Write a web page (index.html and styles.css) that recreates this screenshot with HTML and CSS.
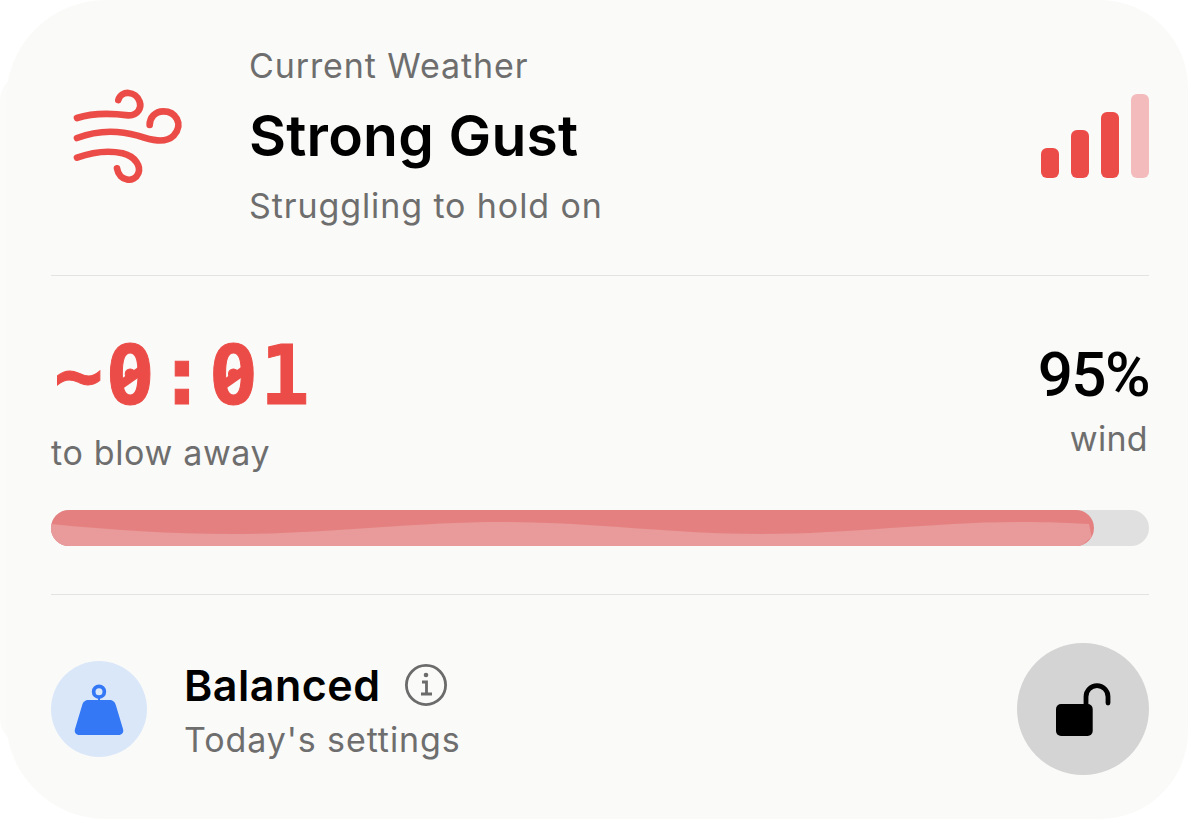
FILE: index.html
```html
<!doctype html>
<html lang="en">
<head>
  <meta charset="UTF-8" />
  <meta name="viewport" content="width=device-width, initial-scale=1.0" />
  <title>Current Weather</title>
  <link rel="stylesheet" href="styles.css">
</head>
<body>

<section class="card">
  <!--Weather-->
  <div class="weather">
    <svg class="wind-icon" width="199" height="130" viewBox="30 0 597 390">
      <path d="M108 144C150 130 200 128 262 136C292 137 302 112 296 95C285 62 240 60 232 90" />
      <path d="M108 204C170 180 230 180 290 197C330 210 372 222 398 197C430 160 402 124 367 124C342 124 326 143 326 165" />
      <path d="M108 263C150 248 200 240 245 250C285 260 300 290 292 310C280 340 235 335 228 295" />
    </svg>
    <div class="weather-text">
      <p class="muted">Current Weather</p>
      <p class="weather-title">Strong Gust</p>
      <p class="muted">Struggling to hold on</p>
    </div>
    <div class="bars">
      <span class="bar bar-1"></span>
      <span class="bar bar-2"></span>
      <span class="bar bar-3"></span>
      <span class="bar bar-4"></span>
    </div>
  </div>

  <!--Countdown-->
  <div class="status">
    <div class="status-row">
      <div>
        <p class="time">~<span class="zero">0</span>:<span class="zero">0</span>1</p>
        <p class="muted time-label">to blow away</p>
      </div>
      <div class="wind">
        <p class="wind-value">95%</p>
        <p class="muted wind-label">wind</p>
      </div>
    </div>
    <div class="progress">
      <div class="progress-fill">
        <svg class="wave" width="1043" height="36" viewBox="0 0 1043 36">
          <path d="M0 14C60 20 120 24 180 24C280 24 360 12 450 12C540 12 620 24 710 24C800 24 880 12 970 12C1000 12 1020 13 1038 14L1040.6 27L1030 36L0 36Z" />
        </svg>
      </div>
    </div>
  </div>

  <!--Settings-->
  <div class="settings">
    <div class="weight">
      <svg width="96" height="96" viewBox="0 0 96 96">
        <circle class="weight-ring" cx="48" cy="30.7" r="5.35" />
        <rect class="weight-body" x="47" y="35" width="2" height="5" />
        <path class="weight-body" d="M38 39H58C62 39 64 41 64.8 44L72 68C73 71.5 71 74 67.5 74H28.5C25 74 23 71.5 24 68L31.2 44C32 41 34 39 38 39Z" />
      </svg>
    </div>
    <div class="settings-text">
      <div class="settings-title">
        <span>Balanced</span>
        <svg class="info" width="42" height="42" viewBox="0 0 42 42">
          <circle cx="21" cy="21" r="19.6" />
          <path d="M17 18H21.5V30M16 30H27" />
          <circle class="info-dot" cx="21" cy="11" r="2.3" />
        </svg>
      </div>
      <p class="muted settings-sub">Today's settings</p>
    </div>
    <button class="lock" type="button">
      <svg width="132" height="132" viewBox="0 0 132 132">
        <rect class="lock-body" x="39" y="61" width="36.7" height="32" rx="5" />
        <path class="lock-shackle" d="M69 62V53.7a11 11 0 0 1 22 0V60" />
      </svg>
    </button>
  </div>
</section>

</body>
</html>
```

FILE: styles.css
```css
* {
  box-sizing: border-box;
}
html, body {
  margin: 0;
  padding: 0;
  background: #fff;
}
p {
  margin: 0;
}
.card {
  width: 1182px;
  height: 819px;
  margin-left: 6px;
  padding: 0 39px 0 45px;
  background: #fafaf8;
  border-radius: 100px 88px 88px 100px;
  box-shadow: -81px 0 0 -75px #fbfbfa;
  overflow: hidden;
  font-family: Inter, "Liberation Sans", sans-serif;
  color: #000;
}
.muted {
  color: #6e6e6e;
  font-size: 34px;
  line-height: 70px;
  letter-spacing: 0.9px;
}

/*Weather*/
.weather {
  display: flex;
  align-items: flex-start;
  height: 276px;
  padding-top: 31px;
  border-bottom: 1px solid #e3e3e1;
}
.wind-icon {
  flex: none;
  margin-top: 39px;
  margin-right: -1px;
}
.wind-icon path {
  fill: none;
  stroke: #ec4c47;
  stroke-width: 20;
  stroke-linecap: round;
}
.weather-text {
  flex: 1;
}
.weather-title {
  font-size: 57px;
  line-height: 70px;
  font-weight: 600;
  letter-spacing: 0.2px;
}
.bars {
  display: flex;
  align-items: flex-end;
  gap: 12px;
  margin-top: 63px;
}
.bar {
  width: 18px;
  border-radius: 6px;
  background: #ec4c47;
}
.bar-1 { height: 30px; }
.bar-2 { height: 48px; }
.bar-3 { height: 66px; }
.bar-4 { height: 84px; background: #f3bbbb; }

/*Countdown*/
.status {
  height: 319px;
  padding-top: 49px;
  border-bottom: 1px solid #e3e3e1;
}
.status-row {
  display: flex;
  justify-content: space-between;
  align-items: flex-start;
}
.time {
  padding: 1px 0 0 3px;
  font-family: "DejaVu Sans Mono", "Liberation Mono", monospace;
  font-size: 82px;
  line-height: 100px;
  font-weight: 700;
  letter-spacing: 2.2px;
  color: #ec4c47;
  -webkit-text-stroke: 1px #ec4c47;
}
/*DejaVu's zero has a dot, the bar turns it into a slashed one*/
.zero {
  display: inline-block;
  position: relative;
}
.zero::after {
  content: '';
  position: absolute;
  left: 10px;
  top: 47px;
  width: 30px;
  height: 9px;
  background: #ec4c47;
  transform: rotate(-35deg);
}
.time-label {
  margin-top: 4px;
  line-height: 46px;
  letter-spacing: 0.65px;
}
.wind {
  padding-top: 12px;
  text-align: right;
}
.wind-value {
  font-family: Roboto, Inter, sans-serif;
  font-size: 62px;
  line-height: 76px;
  font-weight: 500;
  letter-spacing: -1.6px;
}
.wind-label {
  margin-top: 3px;
  margin-right: 1px;
  line-height: 46px;
  letter-spacing: 0.3px;
}
.progress {
  height: 36px;
  margin-top: 34px;
  border-radius: 18px;
  background: #e0e0e0;
}
.progress-fill {
  width: 95%;
  height: 36px;
  border-radius: 18px;
  overflow: hidden;
  background: #e58080;
}
.wave {
  display: block;
}
.wave path {
  fill: #e99a9a;
}

/*Settings*/
.settings {
  display: flex;
  align-items: center;
  padding-top: 48px;
}
.weight {
  flex: none;
  width: 96px;
  height: 96px;
  border-radius: 50%;
  background: #d9e7f9;
}
.weight svg,
.lock svg {
  display: block;
}
.weight-ring {
  fill: none;
  stroke: #3478f6;
  stroke-width: 3.7;
}
.weight-body {
  fill: #3478f6;
}
.settings-text {
  flex: 1;
  margin-left: 37px;
  padding-top: 7px;
}
.settings-title {
  display: flex;
  align-items: center;
  gap: 24px;
  font-size: 43px;
  line-height: 54px;
  font-weight: 600;
  letter-spacing: 0.5px;
}
.info {
  fill: none;
  stroke: #6b6b6b;
  stroke-width: 2.8;
}
.info .info-dot {
  fill: #6b6b6b;
  stroke: none;
}
.settings-sub {
  margin-top: 1px;
  line-height: 54px;
}
.lock {
  flex: none;
  width: 132px;
  height: 132px;
  padding: 0;
  border: 0;
  border-radius: 50%;
  background: #d4d4d4;
}
.lock-body {
  fill: #000;
}
.lock-shackle {
  fill: none;
  stroke: #000;
  stroke-width: 4.8;
  stroke-linecap: round;
}
```
